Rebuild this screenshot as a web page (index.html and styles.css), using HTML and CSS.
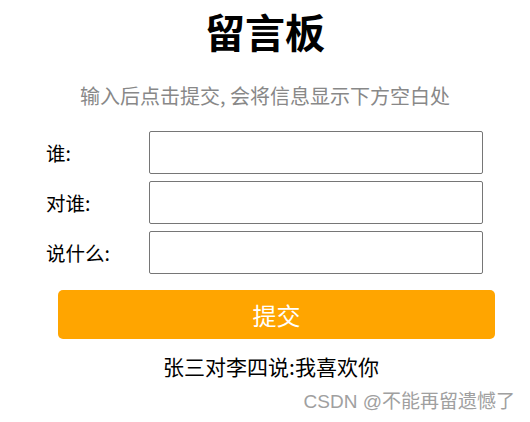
FILE: index.html
```html
<!DOCTYPE html>
<html lang="zh">
<head>
    <meta charset="UTF-8">
    <meta name="viewport" content="width=device-width, initial-scale=1.0">
    <title>留言板</title>
    <link rel="stylesheet" href="styles.css">
</head>
<body>
    <div class="board">
        <h1>留言板</h1>
        <p class="tip">输入后点击提交, 会将信息显示下方空白处</p>
        <div class="row">
            <span class="label">谁:</span>
            <input type="text" id="from">
        </div>
        <div class="row">
            <span class="label">对谁:</span>
            <input type="text" id="to">
        </div>
        <div class="row">
            <span class="label">说什么:</span>
            <input type="text" id="msg">
        </div>
        <button id="submitBtn">提交</button>
        <div id="messages">
            <div class="message">张三对李四说:我喜欢你</div>
        </div>
    </div>
    <div class="watermark">CSDN @不能再留遗憾了</div>

    <script>
        document.getElementById('submitBtn').addEventListener('click', function() {
            const from = document.getElementById('from').value;
            const to = document.getElementById('to').value;
            const msg = document.getElementById('msg').value;
            if (from == '' || to == '' || msg == '') {
                return;
            }
            const div = document.createElement('div');
            div.className = 'message';
            div.textContent = from + '对' + to + '说:' + msg;
            document.getElementById('messages').appendChild(div);
            document.getElementById('from').value = '';
            document.getElementById('to').value = '';
            document.getElementById('msg').value = '';
        });
    </script>
</body>
</html>
```
FILE: styles.css
```css
body {
    margin: 0;
    font-family: "Noto Sans CJK SC", "Noto Sans", sans-serif;
    color: #000;
    background-color: #fff;
}
.board {
    width: 530px;
}
h1 {
    margin: 6px 0 0;
    font-size: 40px;
    line-height: 50px;
    font-weight: bold;
    text-align: center;
}
.tip {
    margin: 28px 0 23px;
    font-size: 20px;
    line-height: 24px;
    color: #888;
    text-align: center;
}
.row {
    display: flex;
    align-items: center;
    margin-bottom: 7px;
    padding-left: 46px;
}
.label {
    width: 103px;
    font-size: 19.5px;
    line-height: 24px;
}
input[type="text"] {
    box-sizing: border-box;
    width: 334px;
    height: 43px;
    margin: 0;
    border: 1px solid #767676;
    border-radius: 2px;
    padding: 0 6px;
}
button {
    display: block;
    width: 437px;
    height: 49px;
    margin: 16px 0 0 58px;
    border: none;
    border-radius: 5px;
    background-color: orange;
    color: white;
    font-family: "Noto Sans CJK SC", sans-serif;
    font-size: 24px;
    cursor: pointer;
}
.message {
    margin-top: 15px;
    padding-left: 12px;
    font-size: 21px;
    line-height: 24px;
    text-align: center;
}
.watermark {
    position: absolute;
    right: 15px;
    top: 391px;
    font-family: "Liberation Sans", "Noto Sans CJK SC", sans-serif;
    font-size: 19px;
    line-height: 22px;
    color: #a0a0a0;
}
```
